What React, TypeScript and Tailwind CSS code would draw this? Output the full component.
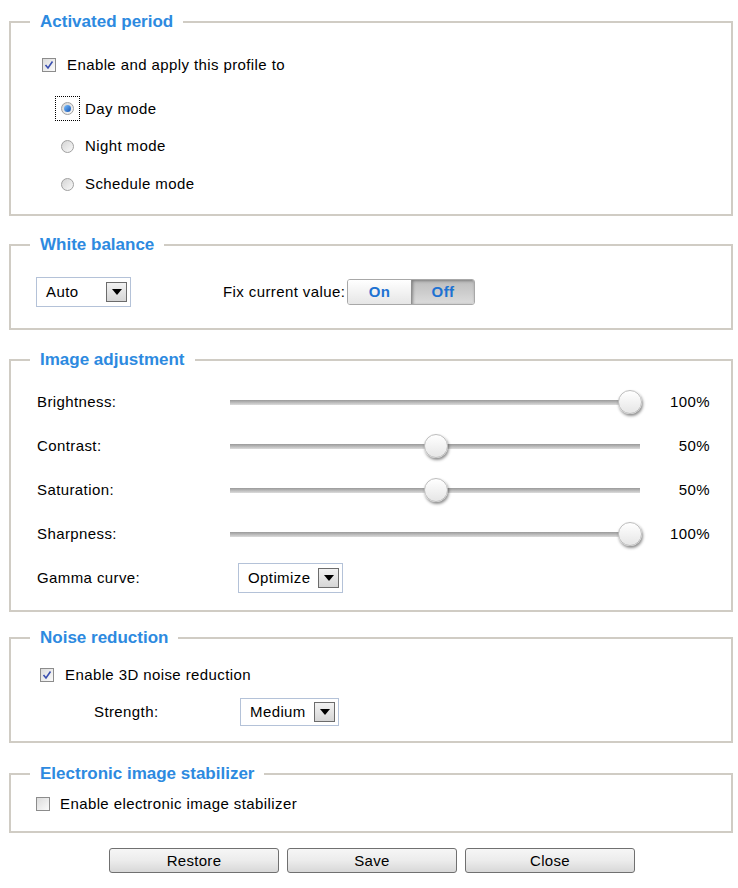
import React from 'react';

const font = { fontFamily: '"Liberation Sans", Arial, sans-serif' };

const Section: React.FC<{ title: string; className: string; children: React.ReactNode }> = ({ title, className, children }) => (
    <fieldset className={`border-2 border-[#d0ccc4] mx-[9px] w-[724px] ${className}`}>
        <legend className="ml-[19px] px-[10px] text-[17px] leading-[18px] font-bold text-[#2d8ae0] tracking-normal">{title}</legend>
        {children}
    </fieldset>
);

const CheckBox: React.FC<{ checked?: boolean }> = ({ checked }) => (
    <span className="w-[14px] h-[14px] border border-[#8c8c8c] bg-gradient-to-br from-[#dcdcdc] to-[#fbfbfb] flex items-center justify-center shrink-0">
        {checked && (
            <svg width="10" height="10" viewBox="0 0 10 10">
                <path d="M1.5 5 L4 8 L8.5 1.5" stroke="#3a4fb0" strokeWidth="1.6" fill="none" />
            </svg>
        )}
    </span>
);

const Radio: React.FC<{ checked?: boolean }> = ({ checked }) => (
    <span className="w-[13px] h-[13px] rounded-full border border-[#a0a0a0] bg-gradient-to-br from-[#d4d4d4] to-[#fafafa] flex items-center justify-center shrink-0">
        {checked && <span className="w-[7px] h-[7px] rounded-full bg-gradient-to-br from-[#7cc0ff] to-[#1252b0]" />}
    </span>
);

const Select: React.FC<{ value: string; className: string }> = ({ value, className }) => (
    <div className={`border border-[#b4c2d8] bg-white flex items-center justify-between pl-[9px] pr-[3px] ${className}`}>
        <span>{value}</span>
        <span className="w-[21px] h-[20px] border border-[#6c6c6c] bg-gradient-to-b from-[#f2f2f2] to-[#d6d6d6] flex items-center justify-center">
            <svg width="10" height="6" viewBox="0 0 10 6">
                <path d="M0 0 H10 L5 6 Z" fill="#000" />
            </svg>
        </span>
    </div>
);

const Slider: React.FC<{ label: string; pct: number }> = ({ label, pct }) => (
    <div className="flex items-center h-[44px]">
        <span className="w-[193px]">{label}</span>
        <div className="relative w-[410px] h-[24px] flex items-center">
            <div className="w-full h-[5px] bg-gradient-to-b from-[#9a9a9a] to-[#dcdcdc]" />
            <span
                className="absolute top-0 w-[24px] h-[24px] rounded-full bg-gradient-to-b from-white to-[#e6e6e6] border border-[#bdbdbd] shadow-[1px_2px_3px_rgba(0,0,0,0.45)]"
                style={{ left: `${(pct / 100) * 388}px` }}
            />
        </div>
        <span className="w-[70px] text-right">{pct}%</span>
    </div>
);

const Button: React.FC<{ label: string }> = ({ label }) => (
    <button className="w-[170px] h-[25px] rounded-[3px] border border-[#707070] bg-gradient-to-b from-[#f6f6f6] via-[#ececec] to-[#d8d8d8] text-[15px] tracking-[0.3px] text-black">
        {label}
    </button>
);

export default function App() {
    return (
        <div className="w-[738px] h-[888px] bg-white text-[15px] leading-[16px] tracking-[0.4px] text-black pt-[13px]" style={font}>
            <Section title="Activated period" className="h-[203px]">
                <div className="pl-[31px] pt-[26px] flex items-center gap-[11px]">
                    <CheckBox checked />
                    <span>Enable and apply this profile to</span>
                </div>
                <div className="pl-[44px] pt-[23px] flex items-center">
                    <span className="w-[25px] h-[25px] border border-dotted border-black flex items-center justify-center">
                        <Radio checked />
                    </span>
                    <span className="ml-[5px]">Day mode</span>
                </div>
                <div className="pl-[50px] pt-[17px] flex items-center gap-[11px]">
                    <Radio />
                    <span>Night mode</span>
                </div>
                <div className="pl-[50px] pt-[22px] flex items-center gap-[11px]">
                    <Radio />
                    <span>Schedule mode</span>
                </div>
            </Section>

            <Section title="White balance" className="h-[94px] mt-[20px]">
                <div className="pl-[25px] pt-[23px] flex items-center">
                    <Select value="Auto" className="w-[95px] h-[30px]" />
                    <span className="ml-[92px] w-[124px]">Fix current value:</span>
                    <div className="flex h-[26px] w-[128px] rounded-[3px] border border-[#a8a8a8] overflow-hidden font-bold text-[#1e72d2]">
                        <span className="w-1/2 flex items-center justify-center bg-gradient-to-b from-white to-[#e6e6e6]">On</span>
                        <span className="w-1/2 flex items-center justify-center border-l border-[#909090] bg-gradient-to-b from-[#bdbdbd] to-[#dcdcdc] shadow-[inset_1px_1px_3px_rgba(0,0,0,0.35)]">Off</span>
                    </div>
                </div>
            </Section>

            <Section title="Image adjustment" className="h-[261px] mt-[21px]">
                <div className="pl-[26px] pt-[11px]">
                    <Slider label="Brightness:" pct={100} />
                    <Slider label="Contrast:" pct={50} />
                    <Slider label="Saturation:" pct={50} />
                    <Slider label="Sharpness:" pct={100} />
                    <div className="flex items-center h-[44px]">
                        <span className="w-[201px]">Gamma curve:</span>
                        <Select value="Optimize" className="w-[105px] h-[30px]" />
                    </div>
                </div>
            </Section>

            <Section title="Noise reduction" className="h-[114px] mt-[17px]">
                <div className="pl-[29px] pt-[20px] flex items-center gap-[11px]">
                    <CheckBox checked />
                    <span>Enable 3D noise reduction</span>
                </div>
                <div className="pl-[83px] pt-[15px] flex items-center">
                    <span className="w-[146px]">Strength:</span>
                    <Select value="Medium" className="w-[99px] h-[28px]" />
                </div>
            </Section>

            <Section title="Electronic image stabilizer" className="h-[68px] mt-[22px]">
                <div className="pl-[25px] pt-[13px] flex items-center gap-[10px]">
                    <CheckBox />
                    <span>Enable electronic image stabilizer</span>
                </div>
            </Section>

            <div className="flex justify-center gap-[8px] mt-[15px] pl-[6px]">
                <Button label="Restore" />
                <Button label="Save" />
                <Button label="Close" />
            </div>
        </div>
    );
}
